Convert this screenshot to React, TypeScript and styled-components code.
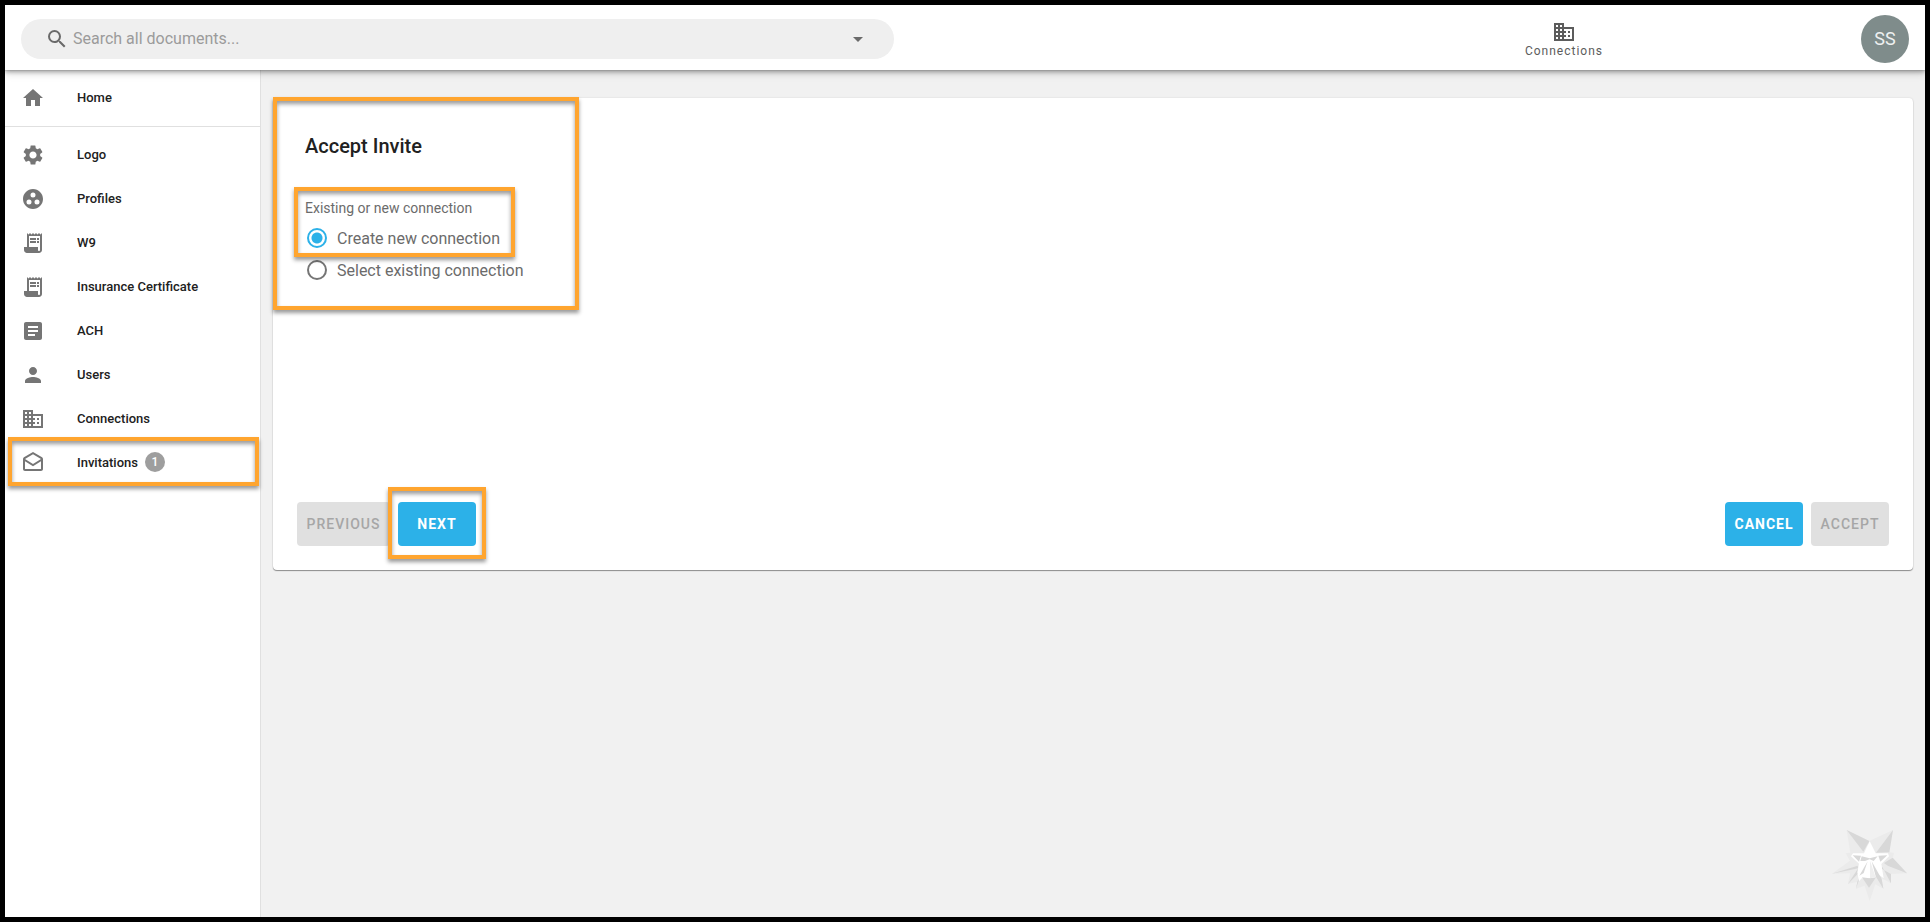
import React, { useState } from "react";
import styled, { createGlobalStyle, css } from "styled-components";
import {
  MdArrowDropDown,
  MdArticle,
  MdBusiness,
  MdGroupWork,
  MdHome,
  MdOutlineDrafts,
  MdPerson,
  MdReceiptLong,
  MdSearch,
  MdSettings,
} from "react-icons/md";
import type { IconType } from "react-icons";

const colors = {
  accent: "#2cb1e8",
  highlight: "#ffa52f",
  icon: "#757575",
  text: "#212121",
  muted: "#6b6b6b",
  canvas: "#f1f1f1",
  line: "#e0e0e0",
};

const GlobalStyle = createGlobalStyle`
  *, *::before, *::after { box-sizing: border-box; }
  body { margin: 0; font-family: Roboto, sans-serif; color: ${colors.text}; }
  button, input { font-family: inherit; }
`;

const Shell = styled.div`
  display: flex;
  flex-direction: column;
  min-height: 100vh;
  border: 5px solid #000;
  background: ${colors.canvas};
`;

const Header = styled.header`
  position: relative;
  z-index: 1;
  display: flex;
  align-items: center;
  height: 65px;
  padding: 2px 16px 0;
  background: #fff;
  box-shadow: 0 2px 4px rgba(0, 0, 0, 0.3), 0 4px 8px rgba(0, 0, 0, 0.12), 0 0 1px rgba(0, 0, 0, 0.4);
  clip-path: inset(0 0 -16px 0);
`;

const SearchBar = styled.form`
  display: flex;
  align-items: center;
  flex: 0 0 46.25%;
  height: 40px;
  padding: 0 24px;
  border-radius: 20px;
  background: #efefef;
  color: #6a6a6a;
`;

const SearchInput = styled.input`
  flex: 1;
  min-width: 0;
  padding: 0 4px;
  border: 0;
  outline: 0;
  background: transparent;
  font-size: 16px;
  color: ${colors.text};
  &::placeholder { color: #9b9b9b; opacity: 1; }
`;

const PlainButton = styled.button`
  display: flex;
  padding: 0;
  border: 0;
  background: none;
  color: inherit;
`;

const HeaderLink = styled.a`
  display: flex;
  flex-direction: column;
  align-items: center;
  margin-left: auto;
  margin-right: 258px;
  font-size: 12px;
  line-height: 14px;
  letter-spacing: 1px;
  color: #5c5c5c;
  text-decoration: none;
`;

const Avatar = styled.button`
  width: 48px;
  height: 48px;
  padding: 0;
  border: 0;
  border-radius: 50%;
  background: #7f8c8b;
  color: #eef0f0;
  font-size: 18px;
`;

const Body = styled.div`
  display: flex;
  flex: 1;
`;

const Sidebar = styled.nav`
  flex: 0 0 256px;
  border-right: 1px solid ${colors.line};
  background: #fff;
`;

const NavGroup = styled.ul`
  margin: 0;
  padding: 6px 0;
  list-style: none;
  & + & { border-top: 1px solid ${colors.line}; }
`;

const NavItem = styled.li`
  position: relative;
`;

const NavLink = styled.a`
  display: flex;
  align-items: center;
  gap: 32px;
  height: 44px;
  padding: 0 16px;
  font-size: 13px;
  font-weight: 500;
  color: ${colors.text};
  text-decoration: none;
  svg { color: ${colors.icon}; }
`;

const NavLabel = styled.span`
  display: flex;
  align-items: center;
  gap: 7px;
  padding-bottom: 2px;
`;

const Badge = styled.span`
  display: grid;
  place-items: center;
  width: 20px;
  height: 20px;
  border-radius: 50%;
  background: #9e9e9e;
  color: #fff;
  font-size: 12px;
`;

const Highlight = styled.span<{ $inset: string }>`
  position: absolute;
  inset: ${(p) => p.$inset};
  border: 4px solid ${colors.highlight};
  box-shadow: 0 3px 4px rgba(0, 0, 0, 0.4), inset 0 3px 4px rgba(0, 0, 0, 0.4);
  pointer-events: none;
`;

const Main = styled.main`
  display: flex;
  flex-direction: column;
  justify-content: space-between;
  flex: 1;
  min-width: 0;
  padding: 28px 12px 16px;
`;

const Card = styled.section`
  display: flex;
  flex-direction: column;
  justify-content: space-between;
  min-height: 472px;
  padding-bottom: 24px;
  border-radius: 4px;
  background: #fff;
  box-shadow: 0 1px 1px rgba(0, 0, 0, 0.4), 0 0 2px rgba(0, 0, 0, 0.12);
`;

const Step = styled.div`
  position: relative;
  align-self: flex-start;
  width: 306px;
  padding: 36px 32px 24px;
`;

const Title = styled.h1`
  margin: 0 0 40px;
  font-size: 20px;
  line-height: 24px;
  font-weight: 500;
`;

const Choices = styled.fieldset`
  min-width: 0;
  margin: 0;
  padding: 0;
  border: 0;
`;

const GroupName = styled.div`
  margin-bottom: 4px;
  font-size: 14px;
  line-height: 20px;
  color: ${colors.muted};
`;

const ChoiceGroup = styled.div`
  position: relative;
`;

const Choice = styled.label`
  display: flex;
  align-items: center;
  gap: 10px;
  height: 32px;
  padding-left: 2px;
  font-size: 16px;
  color: ${colors.muted};
`;

const Radio = styled.input`
  appearance: none;
  width: 20px;
  height: 20px;
  margin: 0;
  border: 2px solid ${colors.icon};
  border-radius: 50%;
  &:checked {
    border-color: ${colors.accent};
    background: radial-gradient(circle, ${colors.accent} 5px, transparent 6px);
  }
`;

const Actions = styled.div`
  display: flex;
  justify-content: space-between;
  padding: 0 24px;
`;

const ActionGroup = styled.div`
  display: flex;
  gap: 8px;
`;

const ButtonSlot = styled.div`
  position: relative;
`;

const Button = styled.button<{ $wide?: boolean }>`
  min-width: ${(p) => (p.$wide ? 93 : 78)}px;
  height: 44px;
  padding: 0 8px;
  border: 0;
  border-radius: 4px;
  background: ${colors.accent};
  color: #fff;
  font-size: 14px;
  font-weight: 700;
  letter-spacing: 1px;
  text-transform: uppercase;
  ${(p) =>
    p.disabled &&
    css`
      background: #e0e0e0;
      color: #a6a6a6;
      font-weight: 500;
    `}
`;

const Emblem = styled.svg`
  align-self: flex-end;
  width: 75px;
  height: 71px;
  margin-right: 6px;
`;

type Entry = { label: string; icon: IconType; count?: number };

const home: Entry[] = [{ label: "Home", icon: MdHome }];
const sections: Entry[] = [
  { label: "Logo", icon: MdSettings },
  { label: "Profiles", icon: MdGroupWork },
  { label: "W9", icon: MdReceiptLong },
  { label: "Insurance Certificate", icon: MdReceiptLong },
  { label: "ACH", icon: MdArticle },
  { label: "Users", icon: MdPerson },
  { label: "Connections", icon: MdBusiness },
  { label: "Invitations", icon: MdOutlineDrafts, count: 1 },
];

const NavList = ({ entries }: { entries: Entry[] }) => (
  <NavGroup>
    {entries.map(({ label, icon: Icon, count }) => (
      <NavItem key={label}>
        <NavLink href="#">
          <Icon size={24} />
          <NavLabel>
            {label}
            {count && <Badge>{count}</Badge>}
          </NavLabel>
        </NavLink>
        {count && <Highlight $inset="-4px 1px -1px 3px" />}
      </NavItem>
    ))}
  </NavGroup>
);

const StarEmblem = () => (
  <Emblem viewBox="21 33 225 213" aria-hidden="true">
    <path
      fill="#ebebeb"
      d="M65 33 133 66 204 33 193 100 207 101 203 116 246 163 198 165 198 193 170 178 175 209 151 196 134 246 119 200 93 209 97 188 69 195 75 163 21 164 75 125 62 103 76 101Z"
    />
    <path
      fill="#d8d8d8"
      d="M65 33 133 66 115 98ZM204 33 193 100 153 101ZM133 66 139 79 128 79ZM203 116 246 163 188 140 177 132ZM21 164 98 140 100 148ZM69 195 98 150 103 160ZM97 188 107 168 93 209ZM198 193 172 144 167 148 198 165ZM175 209 156 163 165 172Z"
    />
    <path
      fill="#fff"
      d="M134 66 152 103 189 103 192 112 169 135 176 178 155 163 150 177 110 178 102 187 97 160 102 134 78 112 84 103 117 103Z"
    />
    <path
      fill="#d8d8d8"
      d="M83 109 108 110 102 128ZM160 110 187 109 166 128ZM110 112 134 118 158 112 146 126 134 121 120 126 106 126ZM111 175 133 178 153 175 132 206ZM103 170 128 127 116 162ZM140 127 170 180 175 209 152 172Z"
    />
    <path fill="#eeeeee" d="M135 125 152 175 135 178Z" />
  </Emblem>
);

export default function App() {
  const [choice, setChoice] = useState("new");
  return (
    <>
      <GlobalStyle />
      <Shell>
        <Header>
          <SearchBar role="search">
            <MdSearch size={24} />
            <SearchInput aria-label="Search all documents" placeholder="Search all documents..." />
            <PlainButton type="button" aria-label="Search options">
              <MdArrowDropDown size={24} />
            </PlainButton>
          </SearchBar>
          <HeaderLink href="#">
            <MdBusiness size={24} />
            Connections
          </HeaderLink>
          <Avatar aria-label="Account">SS</Avatar>
        </Header>
        <Body>
          <Sidebar>
            <NavList entries={home} />
            <NavList entries={sections} />
          </Sidebar>
          <Main>
            <Card>
              <Step>
                <Title>Accept Invite</Title>
                <Choices aria-labelledby="connection-group">
                  <ChoiceGroup>
                    <GroupName id="connection-group">Existing or new connection</GroupName>
                    <Choice>
                      <Radio type="radio" name="connection" checked={choice === "new"} onChange={() => setChoice("new")} />
                      Create new connection
                    </Choice>
                    <Highlight $inset="-11px 32px -3px -11px" />
                  </ChoiceGroup>
                  <Choice>
                    <Radio type="radio" name="connection" checked={choice === "existing"} onChange={() => setChoice("existing")} />
                    Select existing connection
                  </Choice>
                </Choices>
                <Highlight $inset="-1px 0 0 0" />
              </Step>
              <Actions>
                <ActionGroup>
                  <Button disabled $wide>Previous</Button>
                  <ButtonSlot>
                    <Button>Next</Button>
                    <Highlight $inset="-15px -10px -13px -10px" />
                  </ButtonSlot>
                </ActionGroup>
                <ActionGroup>
                  <Button>Cancel</Button>
                  <Button disabled>Accept</Button>
                </ActionGroup>
              </Actions>
            </Card>
            <StarEmblem />
          </Main>
        </Body>
      </Shell>
    </>
  );
}
